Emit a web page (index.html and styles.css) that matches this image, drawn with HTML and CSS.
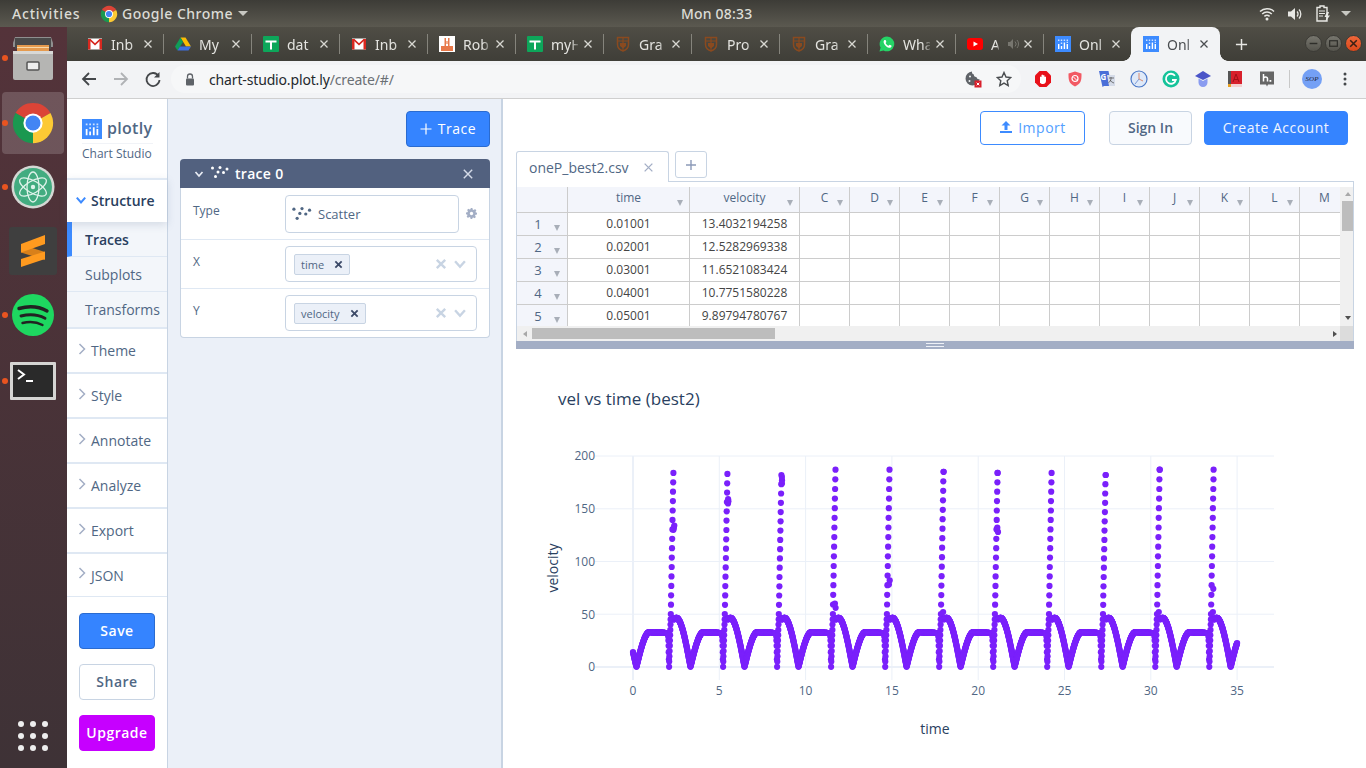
FILE: index.html
```html
<!DOCTYPE html>
<html lang="en">
<head>
<meta charset="utf-8">
<title>Chart Studio</title>
<link rel="stylesheet" href="styles.css">
</head>
<body>
<svg class="sprite" width="0" height="0" aria-hidden="true">
  <defs>
    <symbol id="gmail" viewBox="0 0 16 16"><rect x="1" y="2.500" width="14" height="11" fill="#fff"/><path d="M1 3h2.500v10.500H1zM12.500 3H15v10.500h-2.500z" fill="#d8281f"/><path d="M1 3h2.500L8 7.300 12.500 3H15L8 9.600z" fill="#d8281f"/></symbol>
    <symbol id="drive" viewBox="0 0 16 16"><path d="M5.500 1.500h5L16 10.500h-5z" fill="#fbbc04"/><path d="M5.500 1.500 0 10.500 2.500 14.500 8 6z" fill="#0f9d58"/><path d="M2.500 14.500h11l2.500-4H5z" fill="#3d6fe0"/></symbol>
    <symbol id="sheet" viewBox="0 0 16 16"><rect width="16" height="16" rx="1" fill="#0da65a"/><path d="M2.500 4.500h11v2h-4.500v7h-2v-7h-4.500z" fill="#fff"/></symbol>
    <symbol id="robot" viewBox="0 0 16 16"><rect width="16" height="16" fill="#fff"/><path d="M2 10h12v5H2z" fill="#e8794a"/><path d="M5.500 2h1.500v8H5.500zM9 2h1.500v8H9z" fill="#e8794a"/><path d="M7 5h2v3H7z" fill="#f0b090"/></symbol>
    <symbol id="crest" viewBox="0 0 16 16"><path d="M2.500 1.500h11v7c0 3.500-2.500 5.500-5.500 6.500-3-1-5.500-3-5.500-6.500z" fill="none" stroke="#8a4a1f" stroke-width="1.500"/><path d="M3 5h10M8 2v12" stroke="#8a4a1f" stroke-width="1.200"/><path d="M5 7h6v3l-3 2.500L5 10z" fill="#8a4a1f"/></symbol>
    <symbol id="wa" viewBox="0 0 16 16"><path d="M8 .500a7.400 7.400 0 0 0-6.400 11.100L.500 15.500l4-1A7.400 7.400 0 1 0 8 .500z" fill="#25d366"/><path d="M5.400 4.100c-.9.700-1.100 2-.3 3.600 1 1.900 2.700 3.500 4.700 4 1.300.2 2.300-.3 2.700-1.300l-.1-.8-1.900-.9-.9 1c-1.200-.4-2.400-1.500-3-2.800l.8-.9-.8-2z" fill="#fff"/></symbol>
    <symbol id="yt" viewBox="0 0 16 12"><rect width="16" height="12" rx="3" fill="#f00"/><path d="M6.500 3.500 11 6 6.500 8.500z" fill="#fff"/></symbol>
    <symbol id="plot" viewBox="0 0 16 16"><rect width="16" height="16" fill="#3d8bff"/><path d="M3 8h1.400v5H3zM5.800 10h1.400v3H5.800zM8.700 6.500h1.400V13H8.700zM11.600 8h1.400v5h-1.400z" fill="#fff"/><path d="M3 3.500h1.400v1.400H3zM5.800 3.500h1.400v1.400H5.800zM8.700 3.500h1.400v1.400H8.700zM11.600 3.500h1.400v1.400h-1.400zM5.800 6.500h1.400v1.400H5.800zM11.600 5.800h1.400v1.200h-1.400z" fill="#cfe2ff"/></symbol>
    <symbol id="chrome" viewBox="0 0 48 48"><path d="M24 24 5 13A22 22 0 0 1 43 13z" fill="#db4437"/><path d="M24 24 43 13A22 22 0 0 1 24 46z" fill="#fcc934"/><path d="M24 24 24 46A22 22 0 0 1 5 13z" fill="#1a9850"/><circle cx="24" cy="24" r="10.500" fill="#fff"/><circle cx="24" cy="24" r="8.200" fill="#4285f4"/></symbol>
    <symbol id="scatter" viewBox="0 0 18 13"><g fill="currentColor"><circle cx="1.500" cy="2" r="1.500"/><circle cx="9" cy="1.500" r="1.500"/><circle cx="16" cy="3" r="1.500"/><circle cx="7" cy="6" r="1.500"/><circle cx="12.500" cy="6.500" r="1.500"/><circle cx="4.500" cy="10.500" r="1.500"/></g></symbol>
    <symbol id="chev" viewBox="0 0 10 10"><path d="M1.500 3 5 7l3.500-4" fill="none" stroke="currentColor" stroke-width="1.700"/></symbol>
    <symbol id="chevr" viewBox="0 0 10 14"><path d="M2.500 2 7.500 7l-5 5" fill="none" stroke="currentColor" stroke-width="1.500"/></symbol>
    <symbol id="cross" viewBox="0 0 10 10"><path d="M1.500 1.500l7 7M8.500 1.500l-7 7" fill="none" stroke="currentColor"/></symbol>
  </defs>
</svg>

<header class="topbar">
  <span class="tb-activities">Activities</span>
  <svg class="tb-chrome"><use href="#chrome"/></svg>
  <span class="tb-app">Google Chrome</span>
  <span class="tb-caret"></span>
  <span class="tb-clock">Mon 08:33</span>
  <div class="tb-status">
    <svg class="st-wifi" viewBox="0 0 16 14"><path d="M1 4.500a10 10 0 0 1 14 0M3.200 7a7 7 0 0 1 9.600 0M5.400 9.400a3.800 3.800 0 0 1 5.200 0" fill="none" stroke="#e8e8e4" stroke-width="1.500"/><circle cx="8" cy="12" r="1.500" fill="#e8e8e4"/></svg>
    <svg class="st-vol" viewBox="0 0 16 14"><path d="M1 4.500h3L8 1v12L4 9.500H1z" fill="#e8e8e4"/><path d="M10 4.500a3.500 3.500 0 0 1 0 5M12 2.500a6.500 6.500 0 0 1 0 9" fill="none" stroke="#e8e8e4" stroke-width="1.300"/></svg>
    <svg class="st-bat" viewBox="0 0 14 17"><path d="M1 2.500h3V1h4v1.500h3V16H1z" fill="none" stroke="#e8e8e4" stroke-width="1.400"/><path d="M3 6h6M3 8.500h6M3 11h4" stroke="#e8e8e4" stroke-width="1.200"/><path d="M11 7 8.500 12h2L9.500 16.500 14 10.500h-2.200L13 7z" fill="#e8e8e4"/></svg>
    <span class="tb-caret st-caret"></span>
  </div>
</header>

<div class="desk">
  <aside class="dock">
    <div class="dock-item di-files"><i class="run"></i>
      <svg class="ic-files" viewBox="0 0 42 44"><path d="M3 1h36l2 6v4H1V7z" fill="#8f8f8f"/><rect x="3" y="2" width="36" height="11" fill="#4a4a4a"/><rect x="5" y="9" width="32" height="6" fill="#e59a4e"/><rect x="5" y="11" width="32" height="1" fill="#f8d8a8"/><path d="M1 15h40v27a2 2 0 0 1-2 2H3a2 2 0 0 1-2-2z" fill="#b5b5b3"/><path d="M1 15h40v3H1z" fill="#d8d8d6"/><rect x="15" y="26" width="12" height="8" rx="1" fill="#eee" stroke="#555" stroke-width="1.500"/></svg>
    </div>
    <div class="dock-item di-active"><i class="run"></i><svg class="ic-44"><use href="#chrome"/></svg></div>
    <div class="dock-item"><i class="run"></i>
      <svg class="ic-44" viewBox="0 0 44 44"><circle cx="22" cy="22" r="21.500" fill="#d4d8d4"/><circle cx="22" cy="22" r="19" fill="#42ac80"/><g fill="none" stroke="#dff3ea" stroke-width="1.300"><ellipse cx="22" cy="22" rx="15" ry="6" transform="rotate(30 22 22)"/><ellipse cx="22" cy="22" rx="15" ry="6" transform="rotate(-30 22 22)"/><ellipse cx="22" cy="22" rx="15" ry="6" transform="rotate(90 22 22)"/></g><circle cx="22" cy="22" r="2.200" fill="#dff3ea"/></svg>
    </div>
    <div class="dock-item">
      <svg class="ic-48" viewBox="0 0 48 48"><rect width="48" height="48" rx="3" fill="#3f3f3f"/><path d="M12 17.500 36 25v8L12 25.500z" fill="#d9801a"/><path d="M36 8 12 17v8.500L36 17z" fill="#ff9a1f"/><path d="M36 24.500 12 32v8l24-8z" fill="#ff9a1f"/></svg>
    </div>
    <div class="dock-item"><i class="run"></i>
      <svg class="ic-44" viewBox="0 0 44 44"><circle cx="22" cy="22" r="21" fill="#1ed760"/><g fill="none" stroke="#222" stroke-linecap="round"><path d="M8 15.500c9-2.500 20-2 28 2.500" stroke-width="3.400"/><path d="M10 23c8-2 17-1.500 24 2.200" stroke-width="2.900"/><path d="M11.500 30c7-1.600 14-1.200 20 2" stroke-width="2.400"/></g></svg>
    </div>
    <div class="dock-item di-term"><i class="run"></i>
      <svg class="ic-term" viewBox="0 0 46 38"><rect width="46" height="38" rx="1" fill="#d5d5d3"/><rect x="3" y="3" width="40" height="32" fill="#2a2a2a"/><path d="M8 8l6 4.500-6 4.500" fill="none" stroke="#fff" stroke-width="2"/><path d="M16 19h7" stroke="#fff" stroke-width="2"/></svg>
    </div>
    <div class="dock-apps"><i></i><i></i><i></i><i></i><i></i><i></i><i></i><i></i><i></i></div>
  </aside>

  <div class="chrome">
    <div class="tabstrip">
      <div class="tab"><svg class="fav"><use href="#gmail"/></svg><span class="tab-t">Inb</span><svg class="tab-x"><use href="#cross"/></svg></div>
      <div class="tab"><svg class="fav"><use href="#drive"/></svg><span class="tab-t">My</span><svg class="tab-x"><use href="#cross"/></svg></div>
      <div class="tab"><svg class="fav"><use href="#sheet"/></svg><span class="tab-t">dat</span><svg class="tab-x"><use href="#cross"/></svg></div>
      <div class="tab"><svg class="fav"><use href="#gmail"/></svg><span class="tab-t">Inb</span><svg class="tab-x"><use href="#cross"/></svg></div>
      <div class="tab"><svg class="fav"><use href="#robot"/></svg><span class="tab-t">Rob</span><svg class="tab-x"><use href="#cross"/></svg></div>
      <div class="tab"><svg class="fav"><use href="#sheet"/></svg><span class="tab-t">myH</span><svg class="tab-x"><use href="#cross"/></svg></div>
      <div class="tab"><svg class="fav"><use href="#crest"/></svg><span class="tab-t">Gra</span><svg class="tab-x"><use href="#cross"/></svg></div>
      <div class="tab"><svg class="fav"><use href="#crest"/></svg><span class="tab-t">Pro</span><svg class="tab-x"><use href="#cross"/></svg></div>
      <div class="tab"><svg class="fav"><use href="#crest"/></svg><span class="tab-t">Gra</span><svg class="tab-x"><use href="#cross"/></svg></div>
      <div class="tab"><svg class="fav"><use href="#wa"/></svg><span class="tab-t">Wha</span><svg class="tab-x"><use href="#cross"/></svg></div>
      <div class="tab tab-audio"><svg class="fav"><use href="#yt"/></svg><span class="tab-t tab-short">A</span><svg class="tab-spk" viewBox="0 0 12 12"><path d="M1 4h2l3-3v10L3 8H1z" fill="#77766f"/><path d="M8 3.500a3.500 3.500 0 0 1 0 5M10 2a6 6 0 0 1 0 8" fill="none" stroke="#77766f"/></svg><svg class="tab-x"><use href="#cross"/></svg></div>
      <div class="tab tab-last"><svg class="fav"><use href="#plot"/></svg><span class="tab-t">Onl</span><svg class="tab-x"><use href="#cross"/></svg></div>
      <div class="tab tab-on"><svg class="fav"><use href="#plot"/></svg><span class="tab-t">Onl</span><svg class="tab-x"><use href="#cross"/></svg></div>
      <svg class="tab-new" viewBox="0 0 14 14"><path d="M7 1v12M1 7h12" stroke="#e8e8e4" stroke-width="1.600"/></svg>
      <div class="winbtns">
        <span class="wb"><svg viewBox="0 0 10 10"><path d="M1.500 5h7" stroke="#2e2e2a" stroke-width="1.300"/></svg></span>
        <span class="wb"><svg viewBox="0 0 10 10"><rect x="1.500" y="2.500" width="7" height="5" fill="none" stroke="#2e2e2a" stroke-width="1.100"/></svg></span>
        <span class="wb wb-close"><svg viewBox="0 0 10 10"><path d="M2 2l6 6M8 2l-6 6" stroke="#3a2015" stroke-width="1.400"/></svg></span>
      </div>
    </div>

    <div class="toolbar">
      <svg class="tool" viewBox="0 0 18 18"><path d="M16 9H3M9 3 3 9l6 6" fill="none" stroke="#44474a" stroke-width="1.800"/></svg>
      <svg class="tool" viewBox="0 0 18 18"><path d="M2 9h13M9 3l6 6-6 6" fill="none" stroke="#b0b2b5" stroke-width="1.800"/></svg>
      <svg class="tool" viewBox="0 0 18 18"><path d="M14.500 6A6.500 6.500 0 1 0 15.500 10" fill="none" stroke="#44474a" stroke-width="1.800"/><path d="M15.500 2v5.500H10z" fill="#44474a"/></svg>
      <div class="omni">
        <svg class="lock" viewBox="0 0 10 13"><path d="M2.500 5.500V3.500a2.500 2.500 0 0 1 5 0v2" fill="none" stroke="#5f6368" stroke-width="1.300"/><rect x="1" y="5.500" width="8" height="7" rx="1" fill="#5f6368"/></svg>
        <span class="url">chart-studio.plot.ly<span class="url-p">/create/#/</span></span>
        <svg class="ext-cookie" viewBox="0 0 18 18"><path d="M8 1.500a7 7 0 1 0 7.500 7.500c-1.500.5-3-.5-3-2-1.500.3-3-1-2.500-2.500-1.500-.2-2.300-1.500-2-3z" fill="#5f6368"/><circle cx="6" cy="6.500" r="1" fill="#f2f3f5"/><circle cx="5.500" cy="11" r="1" fill="#f2f3f5"/><rect x="10.500" y="10.500" width="7" height="7" fill="#d8202c"/><path d="M12.700 12.700l2.600 2.600M15.300 12.700l-2.600 2.600" stroke="#fff"/></svg>
        <svg class="ext-star" viewBox="0 0 16 16"><path d="M8 1.500l2 4.500 4.800.5-3.600 3.200 1 4.800L8 12.100 3.800 14.500l1-4.800L1.200 6.500 6 6z" fill="none" stroke="#4a4d50" stroke-width="1.400"/></svg>
      </div>
      <div class="exts">
        <svg class="ext" viewBox="0 0 18 18"><path d="M5.500 1h7L17 5.500v7L12.500 17h-7L1 12.500v-7z" fill="#e8111a"/><path d="M6 13V7a1 1 0 0 1 1.500 0V5a1 1 0 0 1 1.500 0V5.500a1 1 0 0 1 1.500 0V7a1 1 0 0 1 1.500 0v3.500c0 2-1 3.500-3 3.500-1.500 0-2-.5-3-1z" fill="#fff"/></svg>
        <svg class="ext" viewBox="0 0 18 18"><path d="M2.500 3.500 9 1.500l6.500 2c0 6 0 10-6.500 13-6.500-3-6.500-7-6.500-13z" fill="#f25a64"/><circle cx="9" cy="8.500" r="3" fill="none" stroke="#fff" stroke-width="1.200"/><path d="M7 6.500l4 4" stroke="#fff"/></svg>
        <svg class="ext" viewBox="0 0 18 18"><path d="M1 1h9.500l3 15H6l-1.500 1z" fill="#4a6fd8"/><path d="M9 5h8v11h-6z" fill="#d5dbe8"/><text class="ext-g" x="2.500" y="10">G</text><path d="M11 8h5M13 7v1.500c0 2-1 3.500-2.500 4M12 10c1 1.500 2.500 2.500 4 3" fill="none" stroke="#555" stroke-width=".8"/></svg>
        <svg class="ext" viewBox="0 0 18 18"><circle cx="9" cy="9" r="8" fill="#dfe9f8" stroke="#4a78c8" stroke-width="1.200"/><path d="M9 9V3M9 9l4 2" stroke="#d88a70" stroke-width="1"/><path d="M9 9l-4 5" stroke="#7a9ad8" stroke-width="1"/></svg>
        <svg class="ext" viewBox="0 0 18 18"><circle cx="9" cy="9" r="8.500" fill="#15c39a"/><path d="M13 5.800A5 5 0 1 0 13.800 10H10" fill="none" stroke="#fff" stroke-width="1.800"/></svg>
        <svg class="ext" viewBox="0 0 18 18"><path d="M9 1 17 6 9 10 1 6z" fill="#4a54c8"/><path d="M4.500 8.500v4a4.500 4.500 0 0 0 9 0v-4L9 11z" fill="#8a9cf0"/></svg>
        <svg class="ext" viewBox="0 0 18 18"><rect x="2" y="1" width="14" height="15" fill="#d8202c"/><rect x="2" y="1" width="3" height="15" fill="#555"/><path d="M7 12l3-8 3 8M8 9.500h4" fill="none" stroke="#a01018"/><path d="M2 14h14v3H2z" fill="#f3d0d0"/><rect x="2" y="14" width="3" height="3" fill="#e8a020"/></svg>
        <svg class="ext" viewBox="0 0 18 18"><path d="M2 1.500h14v13h-6l-1 2-1-2H2z" fill="#666"/><path d="M5.500 4v7.500M5.500 8c1-1.500 4-1.500 4 .5v3" fill="none" stroke="#fff" stroke-width="1.500"/><rect x="11.500" y="10" width="1.800" height="1.800" fill="#fff"/></svg>
        <span class="ext-sep"></span>
        <span class="avatar"><i>SOP</i></span>
        <svg class="ext-more" viewBox="0 0 4 14"><circle cx="2" cy="2" r="1.500" fill="#44474a"/><circle cx="2" cy="7" r="1.500" fill="#44474a"/><circle cx="2" cy="12" r="1.500" fill="#44474a"/></svg>
      </div>
    </div>

    <div class="page">
      <nav class="nav">
        <div class="brand">
          <div class="brand-row"><svg class="brand-ic"><use href="#plot"/></svg><span class="brand-t">plotly</span></div>
          <div class="brand-s">Chart Studio</div>
        </div>
        <div class="sec sec-open"><svg class="chev-b"><use href="#chev"/></svg>Structure</div>
        <div class="sub sub-on">Traces</div>
        <div class="sub">Subplots</div>
        <div class="sub sub-last">Transforms</div>
        <div class="sec"><svg class="chev-r"><use href="#chevr"/></svg>Theme</div>
        <div class="sec"><svg class="chev-r"><use href="#chevr"/></svg>Style</div>
        <div class="sec"><svg class="chev-r"><use href="#chevr"/></svg>Annotate</div>
        <div class="sec"><svg class="chev-r"><use href="#chevr"/></svg>Analyze</div>
        <div class="sec"><svg class="chev-r"><use href="#chevr"/></svg>Export</div>
        <div class="sec sec-end"><svg class="chev-r"><use href="#chevr"/></svg>JSON</div>
        <div class="nav-btns">
          <button class="nb nb-save">Save</button>
          <button class="nb nb-share">Share</button>
          <button class="nb nb-up">Upgrade</button>
        </div>
      </nav>

      <section class="panel">
        <div class="panel-top"><button class="btn-trace"><svg viewBox="0 0 12 12"><path d="M6 .5v11M.5 6h11" stroke="#fff" stroke-width="1.200"/></svg>Trace</button></div>
        <div class="card">
          <div class="card-h"><svg class="ch-chev"><use href="#chev"/></svg><svg class="ch-sc"><use href="#scatter"/></svg><span class="ch-t">trace 0</span><svg class="ch-x"><use href="#cross"/></svg></div>
          <div class="row row-type"><span class="lab">Type</span>
            <div class="fld fld-type"><svg class="fld-sc"><use href="#scatter"/></svg>Scatter</div>
            <svg class="gear" viewBox="0 0 12 12"><path d="M5 0h2l.3 1.600 1.200.5L9.900 1.200l1.400 1.400-.9 1.400.5 1.200L12 5v2l-1.600.3-.5 1.200.9 1.400-1.400 1.400-1.400-.9-1.200.5L7 12H5l-.3-1.600-1.200-.5-1.400.9L.7 9.400l.9-1.400-.5-1.200L0 7V5l1.600-.3.5-1.200-.9-1.400L2.600.7 4 1.600l1.200-.5z" fill="#a3aec5"/><circle cx="6" cy="6" r="1.800" fill="#fff"/></svg>
          </div>
          <div class="row"><span class="lab">X</span>
            <div class="fld fld-sel"><span class="chip">time<svg class="chip-x"><use href="#cross"/></svg></span><svg class="sel-x"><use href="#cross"/></svg><svg class="sel-c"><use href="#chev"/></svg></div>
          </div>
          <div class="row row-end"><span class="lab">Y</span>
            <div class="fld fld-sel"><span class="chip">velocity<svg class="chip-x"><use href="#cross"/></svg></span><svg class="sel-x"><use href="#cross"/></svg><svg class="sel-c"><use href="#chev"/></svg></div>
          </div>
        </div>
      </section>

      <main class="main">
        <div class="actions">
          <button class="ab ab-import"><svg viewBox="0 0 14 14"><path d="M7 1 2.500 5.500H5.500V10h3V5.500h3z" fill="#3d8bff"/><rect x="1" y="11" width="12" height="2" fill="#3d8bff"/></svg>Import</button>
          <button class="ab ab-sign">Sign In</button>
          <button class="ab ab-create">Create Account</button>
        </div>
        <div class="sheet-tabs">
          <div class="st-tab">oneP_best2.csv<svg class="st-x"><use href="#cross"/></svg></div>
          <div class="st-add"><svg viewBox="0 0 12 12"><path d="M6 1v10M1 6h10" stroke="#8c9ab8" stroke-width="1.400"/></svg></div>
        </div>
        <div class="sheet">
          <div class="sheet-body">
            <div class="grid-wrap">
              <div class="grid">
                <div class="c h"></div><div class="c h m">time</div><div class="c h m">velocity</div><div class="c h m">C</div><div class="c h m">D</div><div class="c h m">E</div><div class="c h m">F</div><div class="c h m">G</div><div class="c h m">H</div><div class="c h m">I</div><div class="c h m">J</div><div class="c h m">K</div><div class="c h m">L</div><div class="c h">M</div>
                <div class="c r m">1</div><div class="c">0.01001</div><div class="c">13.4032194258</div><div class="c"></div><div class="c"></div><div class="c"></div><div class="c"></div><div class="c"></div><div class="c"></div><div class="c"></div><div class="c"></div><div class="c"></div><div class="c"></div><div class="c"></div>
                <div class="c r m">2</div><div class="c">0.02001</div><div class="c">12.5282969338</div><div class="c"></div><div class="c"></div><div class="c"></div><div class="c"></div><div class="c"></div><div class="c"></div><div class="c"></div><div class="c"></div><div class="c"></div><div class="c"></div><div class="c"></div>
                <div class="c r m">3</div><div class="c">0.03001</div><div class="c">11.6521083424</div><div class="c"></div><div class="c"></div><div class="c"></div><div class="c"></div><div class="c"></div><div class="c"></div><div class="c"></div><div class="c"></div><div class="c"></div><div class="c"></div><div class="c"></div>
                <div class="c r m">4</div><div class="c">0.04001</div><div class="c">10.7751580228</div><div class="c"></div><div class="c"></div><div class="c"></div><div class="c"></div><div class="c"></div><div class="c"></div><div class="c"></div><div class="c"></div><div class="c"></div><div class="c"></div><div class="c"></div>
                <div class="c r m">5</div><div class="c">0.05001</div><div class="c">9.89794780767</div><div class="c"></div><div class="c"></div><div class="c"></div><div class="c"></div><div class="c"></div><div class="c"></div><div class="c"></div><div class="c"></div><div class="c"></div><div class="c"></div><div class="c"></div>
              </div>
            </div>
            <div class="vscroll"><i class="arr-u"></i><i class="v-thumb"></i><i class="arr-d"></i></div>
          </div>
          <div class="hscroll"><i class="arr-l"></i><i class="h-thumb"></i><i class="arr-r"></i><i class="corner"></i></div>
        </div>
        <div class="resize"><i></i></div>
        <svg id="chart" class="chart" viewBox="503 349 863 419">
          <g class="grid-lines">
            <path d="M595 456H1274M595 508.800H1274M595 561.500H1274M595 614.200H1274"/>
            <path d="M719.300 456V680M805.600 456V680M891.900 456V680M978.200 456V680M1064.500 456V680M1150.800 456V680M1237.100 456V680"/>
            <path class="zero" d="M595 666.900H1274M633 456V680"/>
          </g>
          <text class="title" x="558" y="405">vel vs time (best2)</text>
          <g class="tick tick-y">
            <text x="595" y="460">200</text><text x="595" y="513">150</text><text x="595" y="566">100</text><text x="595" y="619">50</text><text x="595" y="671">0</text>
          </g>
          <g class="tick tick-x">
            <text x="633" y="695">0</text><text x="719.300" y="695">5</text><text x="805.600" y="695">10</text><text x="891.900" y="695">15</text><text x="978.200" y="695">20</text><text x="1064.500" y="695">25</text><text x="1150.800" y="695">30</text><text x="1237.100" y="695">35</text>
          </g>
          <text class="axt" x="935" y="734">time</text>
          <text class="axt" transform="translate(558 568) rotate(-90)">velocity</text>
          <g id="points" class="points"></g>
        </svg>
      </main>
    </div>
  </div>
</div>
<script src="chart.js"></script>
</body>
</html>
```
FILE: styles.css
```css
* { box-sizing: border-box; }
html, body { margin: 0; padding: 0; }
body { width: 1366px; height: 768px; overflow: hidden; display: flex; flex-direction: column; font-family: "Open Sans", sans-serif; background: #fff; }
.sprite { position: absolute; }
button { font-family: inherit; cursor: pointer; }

/* Top bar */
.topbar { height: 27px; flex: none; display: flex; align-items: center; background: linear-gradient(#3d3c37, #5b5950); color: #dcdcd6; font-family: "Noto Sans", sans-serif; font-size: 14px; font-weight: 500; }
.tb-activities { margin-left: 12px; width: 88px; letter-spacing: .8px; }
.tb-chrome { width: 18px; height: 18px; }
.tb-app { margin-left: 4px; letter-spacing: .5px; width: 112px; white-space: nowrap; }
.tb-caret { width: 0; height: 0; border-left: 5px solid transparent; border-right: 5px solid transparent; border-top: 5px solid #c8c8c2; margin-left: 4px; }
.tb-clock { margin-left: 433px; letter-spacing: .2px; white-space: nowrap; width: 72px; }
.tb-status { margin-left: auto; display: flex; align-items: center; padding-right: 15px; }
.st-wifi { width: 16px; height: 14px; margin-right: 12px; }
.st-vol { width: 16px; height: 14px; margin-right: 13px; }
.st-bat { width: 14px; height: 17px; margin-right: 11px; }
.st-caret { margin-left: 0; }

.desk { flex: 1; display: flex; min-height: 0; }

/* Dock */
.dock { width: 67px; flex: none; display: flex; flex-direction: column; align-items: center; background: linear-gradient(#54333a, #3e3236); padding: 0 3px 0 2px; }
.dock-item { position: relative; width: 62px; height: 62px; margin-bottom: 2px; display: flex; align-items: center; justify-content: center; border-radius: 4px; flex: none; }
.di-files { margin-bottom: 3px; }
.di-term { margin-top: 2px; }
.run { position: absolute; left: 0; top: 28px; width: 6px; height: 6px; border-radius: 50%; background: #e95420; }
.di-active { background: rgba(255,255,255,.17); }
.ic-files { width: 42px; height: 44px; }
.ic-44 { width: 44px; height: 44px; }
.ic-48 { width: 48px; height: 48px; }
.ic-term { width: 46px; height: 38px; }
.dock-apps { margin-top: auto; margin-bottom: 17px; display: grid; grid-template-columns: repeat(3, 6px); gap: 6px; }
.dock-apps i { width: 6px; height: 6px; border-radius: 50%; background: #eee; }

/* Chrome */
.chrome { flex: 1; min-width: 0; display: flex; flex-direction: column; }
.tabstrip { height: 34px; flex: none; display: flex; padding-left: 8px; background: linear-gradient(#4f4d45, #3f3e38); position: relative; }
.tab { width: 88px; flex: none; height: 34px; display: flex; align-items: center; position: relative; color: #e4e4e0; font-family: "Noto Sans", sans-serif; font-size: 14px; }
.tab::after { content: ""; position: absolute; right: -1px; top: 7px; height: 20px; width: 1px; background: #85847c; }
.tab-last::after { display: none; }
.fav { width: 16px; height: 16px; margin-left: 12px; flex: none; }
.tab-audio .fav { height: 12px; }
.tab-t { margin-left: 8px; width: 27px; white-space: nowrap; flex: none; -webkit-mask-image: linear-gradient(90deg, #000 72%, rgba(0,0,0,.25)); mask-image: linear-gradient(90deg, #000 72%, rgba(0,0,0,.25)); }
.tab-short { width: 8px; }
.tab-spk { width: 12px; height: 12px; margin-left: 8px; flex: none; margin-right: -1px; }
.tab-x { width: 10px; height: 10px; margin-left: auto; margin-right: 10px; flex: none; color: #d8d8d2; stroke-width: 1.300; }
.tab-on { background: #f2f3f5; color: #4a4d50; border-radius: 8px 8px 0 0; width: 89px; }
.tab-on .tab-x { color: #4a4d50; margin-right: 11px; }
.tab-on::before, .tab-on::after { content: ""; position: absolute; bottom: 0; top: auto; width: 8px; height: 8px; }
.tab-on::before { left: -8px; background: radial-gradient(circle at 0 0, transparent 7.500px, #f2f3f5 8px); }
.tab-on::after { right: -8px; background: radial-gradient(circle at 100% 0, transparent 7.500px, #f2f3f5 8px); }
.tab-new { width: 13px; height: 13px; margin: 11px 0 0 15px; flex: none; }
.winbtns { margin-left: auto; margin-right: 4px; display: flex; gap: 3px; align-items: center; height: 34px; padding-bottom: 2px; }
.wb { width: 17px; height: 17px; border-radius: 50%; background: linear-gradient(#77766e, #55544d); display: flex; align-items: center; justify-content: center; border: 1px solid #3c3b36; }
.wb svg { width: 11px; height: 11px; }
.wb-close { background: linear-gradient(#f0673a, #d8481b); }

.toolbar { height: 38px; flex: none; display: flex; align-items: center; background: #f2f3f5; border-bottom: 1px solid #cfcfcf; padding: 0 0 1px 13px; }
.tool { width: 18px; height: 18px; margin-right: 14px; flex: none; }
.omni { width: 850px; height: 28px; margin-left: -5px; border-radius: 14px; background: #f6f7f8; display: flex; align-items: center; flex: none; padding-left: 14px; }
.lock { width: 10px; height: 13px; margin-right: 14px; flex: none; }
.url { font-family: "Noto Sans", sans-serif; font-size: 14px; letter-spacing: -.15px; color: #24292d; white-space: nowrap; }
.url-p { color: #6b7075; }
.ext-cookie { width: 18px; height: 18px; margin-left: auto; margin-right: 14px; }
.ext-star { width: 16px; height: 16px; margin-right: 9px; }
.exts { display: flex; align-items: center; flex: 1; padding-left: 13px; }
.ext { width: 18px; height: 18px; margin-right: 14px; flex: none; }
.ext-g { font: 700 8px "Noto Sans", sans-serif; fill: #fff; }
.ext-sep { width: 1px; height: 18px; background: #c8c8c8; margin: 0 12px 0 -1px; }
.avatar { width: 20px; height: 20px; border-radius: 50%; background: #74a0f5; display: flex; align-items: center; justify-content: center; margin-right: 21px; }
.avatar i { font: italic 7px "Liberation Serif", serif; color: #223; }
.ext-more { width: 4px; height: 14px; }

/* Page */
.page { flex: 1; min-height: 0; display: flex; color: #506784; }
.nav { width: 101px; flex: none; background: #fff; border-right: 1px solid #c8d4e3; display: flex; flex-direction: column; }
.brand { height: 79px; padding: 20px 0 0 15px; flex: none; }
.brand-row { display: flex; align-items: center; height: 20px; width: 75px; }
.brand-ic { width: 20px; height: 20px; flex: none; }
.brand-t { font-size: 16px; font-weight: 600; margin: -2px 0 0 5px; color: #506784; letter-spacing: .3px; line-height: 20px; }
.brand-s { font-size: 12px; margin-top: 4px; border-top: 1px solid #f1f3f7; width: 71px; white-space: nowrap; line-height: 20px; }
.sec { height: 45px; flex: none; display: flex; align-items: center; font-size: 14px; border-bottom: 2px solid #dfe8f3; padding-left: 10px; white-space: nowrap; }
.sec-open { height: 44px; border-top: 2px solid #dfe8f3; border-bottom: 0; color: #2a3f5f; font-weight: 600; box-shadow: 0 3px 8px rgba(80,100,140,.18); position: relative; padding: 0 0 2px 8px; }
.sec-end { height: 43px; border-bottom: 1px solid #dfe8f3; }
.chev-b { width: 12px; height: 12px; color: #3d8bff; margin-right: 4px; }
.chev-r { width: 10px; height: 14px; color: #a3aec5; margin-right: 4px; margin-bottom: 4px; }
.sub { height: 35px; flex: none; background: #f3f6fa; font-size: 14px; padding-left: 18px; display: flex; align-items: center; border-bottom: 1px solid #dfe8f3; }
.sub-on { color: #2a3f5f; font-weight: 600; border-left: 5px solid #3d8bff; padding-left: 13px; }
.sub-last { border-bottom: 2px solid #dfe8f3; height: 37px; }
.nav-btns { display: flex; flex-direction: column; gap: 15px; padding: 16px 0 0 12px; }
.nb { width: 76px; height: 36px; border-radius: 4px; border: 1px solid; font-size: 14px; font-weight: 600; letter-spacing: .5px; padding: 0 0 2px; }
.nb-save { background: #3584ff; border-color: #2a6bd0; color: #fff; }
.nb-share { background: #fff; border-color: #c8d4e3; color: #506784; }
.nb-up { background: #c600ff; border-color: #c600ff; color: #fff; }

.panel { width: 335px; flex: none; background: #ebf0f8; border-right: 2px solid #c8d4e3; padding: 12px 11px 0 12px; }
.panel-top { display: flex; justify-content: flex-end; margin-bottom: 12px; }
.btn-trace { width: 84px; height: 36px; border-radius: 4px; border: 1px solid #2a6bd0; background: #3584ff; color: #fff; font-size: 14px; font-weight: 500; letter-spacing: .5px; display: flex; align-items: center; justify-content: center; padding: 0 0 1px; }
.btn-trace svg { width: 12px; height: 12px; margin-right: 6px; }
.card { width: 310px; background: #fff; border-radius: 4px; border: 1px solid #c8d4e3; border-top: 0; }
.card-h { height: 29px; margin: 0 -1px; background: #52617f; border-radius: 4px 4px 0 0; display: flex; align-items: center; color: #fff; font-size: 14px; font-weight: 600; padding: 0 16px 0 14px; }
.ch-chev { width: 10px; height: 10px; color: #e8ecf4; margin-right: 7px; }
.ch-sc { width: 18px; height: 13px; color: #fff; margin-right: 6px; margin-top: -3px; }
.ch-t { letter-spacing: .3px; }
.ch-x { width: 12px; height: 12px; margin-left: auto; color: #d5dbe8; stroke-width: 1.200; }
.row { display: flex; align-items: center; height: 49px; border-bottom: 1px solid #dfe8f3; padding-left: 12px; }
.row-type { height: 52px; }
.row-end { border-bottom: 0; height: 48px; }
.lab { width: 92px; flex: none; font-size: 12px; padding-bottom: 6px; }
.fld { border: 1px solid #c8d4e3; border-radius: 4px; background: #fff; display: flex; align-items: center; font-size: 13px; }
.fld-type { width: 174px; height: 38px; padding-left: 6px; }
.fld-sc { width: 20px; height: 14px; margin-right: 6px; color: #506784; }
.gear { width: 11px; height: 11px; margin-left: 7px; }
.fld-sel { width: 192px; height: 36px; padding: 0 9px 0 8px; }
.chip { display: flex; align-items: center; height: 21px; border: 1px solid #c8d4e3; border-radius: 2px; background: #ebf0f8; font-size: 11px; padding: 0 6px 0 6px; color: #506784; }
.chip-x { width: 9px; height: 9px; margin-left: 10px; color: #3c4a68; stroke-width: 2; }
.sel-x { width: 12px; height: 12px; margin-left: auto; color: #c8d4e3; stroke-width: 2; }
.sel-c { width: 14px; height: 14px; margin-left: 6px; color: #c8d4e3; }

/* Main */
.main { flex: 1; min-width: 0; display: flex; flex-direction: column; background: #fff; }
.actions { display: flex; justify-content: flex-end; padding: 12px 18px 0 0; height: 46px; flex: none; }
.ab { height: 34px; border-radius: 4px; font-size: 14px; letter-spacing: .5px; border: 1px solid; padding: 0 0 2px; display: flex; align-items: center; justify-content: center; }
.ab-import { width: 105px; border-color: #3d8bff; background: #fff; color: #53a0ff; }
.ab-import svg { width: 14px; height: 14px; margin-right: 5px; }
.ab-sign { width: 83px; margin-left: 24px; border-color: #c8d4e3; background: #f8fafd; color: #506784; font-weight: 600; letter-spacing: 0; }
.ab-create { width: 144px; margin-left: 12px; border-color: #3584ff; background: #3584ff; color: #f0f5ff; }
.sheet-tabs { display: flex; align-items: flex-start; flex: none; margin: 5px 12px 0 13px; border-bottom: 1px solid #c8d4e3; padding-top: 1px; height: 32px; }
.st-tab { width: 153px; height: 31px; border: 1px solid #c8d4e3; border-bottom: 0; background: #fff; border-radius: 3px 3px 0 0; display: flex; align-items: center; font-size: 14px; padding-left: 12px; white-space: nowrap; }
.st-x { width: 11px; height: 11px; margin-left: 14px; color: #a3aec5; stroke-width: 1.200; }
.st-add { width: 32px; height: 27px; margin-left: 6px; border: 1px solid #c8d4e3; border-radius: 3px; display: flex; align-items: center; justify-content: center; }
.st-add svg { width: 12px; height: 12px; }
.sheet { margin: 0 12px 0 13px; border-left: 1px solid #c8d4e3; border-right: 1px solid #c8d4e3; flex: none; }
.sheet-body { display: flex; height: 144px; padding-top: 5px; }
.grid-wrap { flex: 1; min-width: 0; overflow: hidden; }
.grid { display: grid; grid-template-columns: 51px 122px 110px repeat(11, 50px); grid-template-rows: 26px repeat(5, 23px); width: 833px; }
.c { border-right: 1px solid #ccc; border-bottom: 1px solid #ccc; font-size: 12px; color: #444; display: flex; align-items: center; justify-content: center; position: relative; padding-bottom: 2px; }
.h { background: #f3f5fb; color: #506784; padding-bottom: 5px; }
.r { background: #f3f5fb; color: #506784; padding-right: 8px; padding-bottom: 1px; font-size: 13px; }
.m::after { content: ""; position: absolute; right: 6px; bottom: 6px; border-left: 3px solid transparent; border-right: 3px solid transparent; border-top: 6px solid #a8aeb8; }
.r.m::after { right: 7px; bottom: 4px; }
.vscroll { width: 13px; flex: none; background: #f0f0f0; position: relative; display: flex; flex-direction: column; align-items: flex-end; }
.v-thumb { width: 11px; height: 30px; background: #bdbdbd; margin-top: 5px; }
.arr-u { width: 0; height: 0; border: 3.500px solid transparent; border-top: 0; border-bottom: 4px solid #a8a8a8; margin: 5px 2px 0 0; }
.arr-d { width: 0; height: 0; border: 3.500px solid transparent; border-bottom: 0; border-top: 4px solid #505050; margin: auto 2px 6px 0; }
.hscroll { height: 15px; background: #f0f0f0; display: flex; align-items: center; }
.arr-l { width: 0; height: 0; border: 3.500px solid transparent; border-left: 0; border-right: 4px solid #a8a8a8; margin-left: 6px; }
.h-thumb { width: 243px; height: 11px; background: #bdbdbd; margin-left: 5px; }
.arr-r { width: 0; height: 0; border: 3.500px solid transparent; border-right: 0; border-left: 4px solid #505050; margin-left: auto; margin-right: 3px; }
.corner { width: 13px; height: 15px; background: #dcdcdc; }
.resize { height: 8px; flex: none; margin: 0 12px 0 13px; background: #a3aec5; display: flex; justify-content: center; align-items: center; }
.resize i { width: 18px; height: 4px; border-top: 1px solid #eef1f7; border-bottom: 1px solid #eef1f7; }
.chart { flex: 1; min-height: 0; width: 863px; display: block; }
.grid-lines path { fill: none; stroke: #ebf0f8; stroke-width: 1; }
.grid-lines .zero { stroke-width: 2; }
.title { font-size: 17px; fill: #2a3f5f; }
.tick text { font-size: 12px; fill: #506784; }
.tick-y text { text-anchor: end; }
.tick-x text { text-anchor: middle; }
.axt { font-size: 14px; fill: #2a3f5f; text-anchor: middle; }
.points circle { fill: #7a20fb; }
```
FILE: chart.js
```js
(function () {
  var NS = 'http://www.w3.org/2000/svg';
  var g = document.getElementById('points');
  var X0 = 633, SX = 17.26, Y0 = 666.8, SY = 1.054, PERIOD = 3.13, T0 = -0.63;
  var tops = [184, 183, 182, 187, 187, 185, 184, 184, 182, 187, 187];
  var extras = [
    [0, 130, 0.06], [0, 132, 0.08], [0, 134, 0.1],
    [1, 155, 0.06], [1, 157, 0.08], [1, 159, 0.06],
    [2, 174, 0.03], [2, 177, 0.03], [2, 180, 0.02],
    [3, 56, 0.15], [3, 60, 0.1], [4, 78, 0.08], [4, 82, 0.12],
    [5, 52, 0.12], [6, 128, 0.08], [6, 132, 0.04], [9, 52, 0.1], [10, 74, 0.1], [10, 52, 0.1]
  ];
  function dot(t, v) {
    var c = document.createElementNS(NS, 'circle');
    c.setAttribute('cx', (X0 + t * SX).toFixed(1));
    c.setAttribute('cy', (Y0 - v * SY).toFixed(1));
    c.setAttribute('r', '3.1');
    g.appendChild(c);
  }
  function spike(u, top) {
    return u < 0.4 ? 50 * u / 0.4 : 50 + (top - 50) * (u - 0.4) / 0.6;
  }
  function value(t) {
    var n = (t - T0) / PERIOD, k = Math.floor(n), p = (n - k) * PERIOD, u;
    if (t < 0.2) return 14 * (1 - t / 0.2);
    if (p < 0.83) return 46.5 * Math.cos(p / 0.83 * Math.PI / 2);
    if (p < 1.6) { u = (p - 0.83) / 0.77; return 33 * Math.sin(u * Math.PI / 2); }
    if (p < 2.65) return 33 - (p - 1.6);
    if (p < 2.72) { u = (p - 2.65) / 0.07; return 32 * Math.cos(u * Math.PI / 2); }
    if (p < 2.98) { u = Math.min(1, (p - 2.72) / 0.25); return spike(u, tops[k] || 184); }
    return 45 + (p - 2.98) * 10;
  }
  for (var i = 0; i <= 3500; i++) dot(i / 100, value(i / 100));
  extras.forEach(function (e) {
    var u = e[1] < 50 ? 0.4 * e[1] / 50 : 0.4 + 0.6 * (e[1] - 50) / 134;
    dot(2.09 + e[0] * PERIOD + 0.26 * u + e[2], e[1]);
  });
})();
```
